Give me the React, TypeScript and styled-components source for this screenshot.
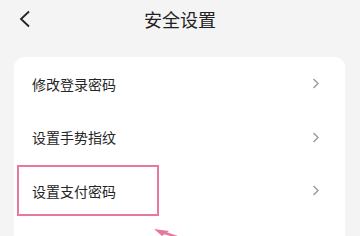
import React from "react";
import styled, { createGlobalStyle } from "styled-components";

const GlobalStyle = createGlobalStyle`
  html, body {
    margin: 0;
    padding: 0;
    background: #f4f4f4;
    font-family: "Noto Sans CJK SC", "Noto Sans", sans-serif;
  }
`;

const Page = styled.div`
  position: relative;
  width: 360px;
  height: 236px;
  overflow: hidden;
  background: #f4f4f4;
`;

const NavBar = styled.div`
  display: grid;
  grid-template-columns: 50px 1fr 50px;
  align-items: center;
  height: 36px;
  padding-top: 1px;
`;

const BackBtn = styled.button`
  justify-self: start;
  margin-left: 17px;
  width: 18px;
  height: 22px;
  padding: 0;
  border: none;
  background: none;
  display: flex;
  align-items: center;
`;

const Title = styled.div`
  text-align: center;
  font-size: 18px;
  color: #222;
`;

const Card = styled.div`
  margin: 20px 15px 0 14px;
  background: #fff;
  border-radius: 10px;
`;

const Row = styled.div`
  position: relative;
  display: flex;
  align-items: center;
  justify-content: space-between;
  height: 53.5px;
  padding: 0 25px 0 18px;
`;

const RowLabel = styled.span`
  font-size: 14px;
  color: #262626;
`;

const Highlight = styled.div`
  position: absolute;
  left: 3px;
  top: 1px;
  width: 138px;
  height: 47px;
  border: 2.5px solid #e8789f;
`;

const Pointer = styled.svg`
  position: absolute;
  left: 150px;
  top: 226px;
`;

const ChevronRight = () => (
  <svg width="8" height="11" viewBox="0 0 8 11">
    <path d="M1.5 1 L6 5.5 L1.5 10" fill="none" stroke="#9a9a9a" strokeWidth="1.4" />
  </svg>
);

const items = ["修改登录密码", "设置手势指纹", "设置支付密码", "修改绑定手机"];

export default function App() {
  return (
    <Page>
      <GlobalStyle />
      <NavBar>
        <BackBtn>
          <svg width="14" height="18" viewBox="0 0 14 18">
            <path d="M12 1.5 L4 9 L12 16.5" fill="none" stroke="#222" strokeWidth="1.8" />
          </svg>
        </BackBtn>
        <Title>安全设置</Title>
        <span />
      </NavBar>
      <Card>
        {items.map((label, i) => (
          <Row key={label}>
            <RowLabel>{label}</RowLabel>
            <ChevronRight />
            {i === 2 && <Highlight />}
          </Row>
        ))}
      </Card>
      <Pointer width="40" height="12" viewBox="0 0 40 12">
        <polygon points="4,3 19,5 12,10" fill="#e8789f" />
        <line x1="12" y1="6" x2="36" y2="14" stroke="#e8789f" strokeWidth="2.5" />
      </Pointer>
    </Page>
  );
}
